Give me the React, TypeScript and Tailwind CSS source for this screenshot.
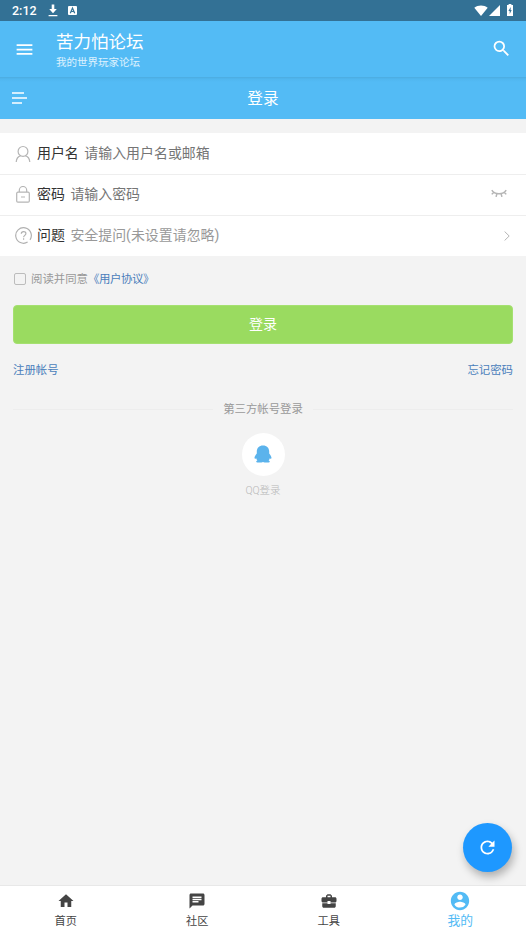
import type { ReactNode } from 'react';

type IconProps = { d: string; className?: string };

function Icon({ d, className }: IconProps) {
    return (
        <svg viewBox="0 0 24 24" fill="currentColor" className={className}>
            <path d={d} />
        </svg>
    );
}

const ICONS = {
    menu: 'M3 18h18v-2H3v2zm0-5h18v-2H3v2zm0-7v2h18V6H3z',
    search: 'M15.5 14h-.79l-.28-.27A6.471 6.471 0 0 0 16 9.5 6.5 6.5 0 1 0 9.5 16c1.61 0 3.09-.59 4.23-1.57l.27.28v.79l5 4.99L20.49 19l-4.99-5zm-6 0C7.01 14 5 11.99 5 9.5S7.01 5 9.5 5 14 7.01 14 9.5 11.99 14 9.5 14z',
    home: 'M10 20v-6h4v6h5v-8h3L12 3 2 12h3v8z',
    chat: 'M20 2H4c-1.1 0-1.99.9-1.99 2L2 22l4-4h14c1.1 0 2-.9 2-2V4c0-1.1-.9-2-2-2zM6 9h12v2H6V9zm8 5H6v-2h8v2zm4-6H6V6h12v2z',
    tools: 'M10 16v-1H3.01L3 19c0 1.11.89 2 2 2h14c1.11 0 2-.89 2-2v-4h-7v1h-4zm10-9h-4.01V5l-2-2h-4l-2 2v2H4c-1.1 0-2 .9-2 2v3c0 1.11.89 2 2 2h6v-2h4v2h6c1.1 0 2-.9 2-2V9c0-1.1-.9-2-2-2zm-6 0h-4V5h4v2z',
    account: 'M12 2C6.48 2 2 6.48 2 12s4.48 10 10 10 10-4.48 10-10S17.52 2 12 2zm0 3c1.66 0 3 1.34 3 3s-1.34 3-3 3-3-1.34-3-3 1.34-3 3-3zm0 14.2a7.2 7.2 0 0 1-6-3.22c.03-1.99 4-3.08 6-3.08 1.99 0 5.97 1.09 6 3.08a7.2 7.2 0 0 1-6 3.22z',
    refresh: 'M17.65 6.35A7.958 7.958 0 0 0 12 4c-4.42 0-7.99 3.58-7.99 8s3.57 8 7.99 8c3.73 0 6.84-2.55 7.73-6h-2.08A5.99 5.99 0 0 1 12 18c-3.31 0-6-2.69-6-6s2.69-6 6-6c1.66 0 3.14.69 4.22 1.78L13 11h7V4l-2.35 2.35z',
};

const NAV = [
    { id: 'home', label: '首页', icon: ICONS.home },
    { id: 'community', label: '社区', icon: ICONS.chat },
    { id: 'tools', label: '工具', icon: ICONS.tools },
    { id: 'mine', label: '我的', icon: ICONS.account },
];

function StatusBar() {
    return (
        <div className="h-[21px] shrink-0 bg-[#337195] flex items-center pl-3 pr-3 text-white">
            <span className="font-[Roboto,sans-serif] font-medium text-[12.5px] leading-none w-9 pt-px">2:12</span>
            <svg viewBox="0 0 10 13" className="w-[10px] h-[13px] fill-white">
                <path d="M3.7 0.5h2.6v4.6h2.5L5 9.2 1.2 5.1h2.5zM.6 11h8.8v1.2H.6z" />
            </svg>
            <svg viewBox="0 0 9 9" className="w-[9px] h-[9px] ml-[10px]">
                <rect width="9" height="9" rx="1" fill="white" />
                <path d="M2.3 7.2 4.5 2l2.2 5.2M3.1 5.5h2.8" fill="none" stroke="#337195" strokeWidth="1.2" />
            </svg>
            <div className="ml-auto flex items-center pb-px">
                <svg viewBox="0 0 14 11" className="w-[14px] h-[11px] fill-white">
                    <path d="M.3 2.8C4-.4 10-.4 13.7 2.8L7 11z" />
                </svg>
                <svg viewBox="0 0 11 11" className="w-[11px] h-[11px] ml-px fill-white">
                    <path d="M11 0v11H0z" />
                </svg>
                <svg viewBox="0 0 6 12" className="w-[6px] h-[12px] ml-[7px] mr-px">
                    <path d="M1.6 0h2.8v1H6v11H0V1h1.6z" fill="white" />
                    <path d="M3.7 3 1.4 7h1.3v3l2-4H3.6z" fill="#337195" />
                </svg>
            </div>
        </div>
    );
}

function FieldRow({ icon, label, children }: { icon: ReactNode; label: string; children: ReactNode }) {
    return (
        <div className="h-10 box-content first:pt-px flex items-center pl-[13px] pr-[14px] text-[13.95px] leading-5">
            <span className="w-5 mr-1 flex justify-center">{icon}</span>
            <span className="text-[#333] mr-[5.5px] pb-[2px]">{label}</span>
            {children}
        </div>
    );
}

function App() {
    return (
        <div className="h-[935px] w-full flex flex-col relative bg-[#f3f3f3] font-[Roboto,'Noto_Sans_CJK_SC',sans-serif]">
            <StatusBar />

            {/* App header */}
            <header className="h-14 shrink-0 bg-[#53bbf5] text-white flex items-center pl-[14px] pr-[14px]">
                <Icon d={ICONS.menu} className="w-[21px] h-[21px]" />
                <div className="ml-[21px] mt-[3px]">
                    <h1 className="text-[17.5px] leading-[23px]">苦力怕论坛</h1>
                    <p className="text-[10.5px] leading-[17px] text-white/80">我的世界玩家论坛</p>
                </div>
                <Icon d={ICONS.search} className="w-[21px] h-[21px] ml-auto mb-px" />
            </header>

            {/* Page title */}
            <div className="h-[42px] shrink-0 bg-[linear-gradient(#4cabdf,#50b6ef_2px,#53bbf5_5px)] text-white grid grid-cols-[1fr_auto_1fr] items-center px-3">
                <svg viewBox="0 0 16 12" className="w-4 h-3" stroke="white" strokeWidth="1.5">
                    <path d="M0 1h12M0 6h15M0 11h10" />
                </svg>
                <h2 className="text-[15.7px] leading-5 pt-px">登录</h2>
            </div>

            <main className="flex-1 pt-[14px]">
                <div className="bg-white divide-y divide-[#eeeeee]">
                    <FieldRow
                        label="用户名"
                        icon={
                            <svg viewBox="0 0 16 18" className="w-4 h-[18px] mb-px fill-none stroke-[#b5b5b5]" strokeWidth="1.2">
                                <circle cx="8" cy="6.4" r="4.9" />
                                <path d="M1.2 17c.3-3.4 2-5.6 4.6-6.3M14.8 17c-.3-3.4-2-5.6-4.6-6.3" />
                            </svg>
                        }
                    >
                        <span className="text-[#757575] pb-[2px]">请输入用户名或邮箱</span>
                    </FieldRow>
                    <FieldRow
                        label="密码"
                        icon={
                            <svg viewBox="0 0 14 17" className="w-[14px] h-[17px] mb-px fill-none stroke-[#b5b5b5]" strokeWidth="1.2">
                                <rect x=".7" y="6.2" width="12.6" height="10" rx="1.2" />
                                <path d="M3.3 6V4.2a3.7 3.7 0 0 1 7.4 0V6M5 11h4" />
                            </svg>
                        }
                    >
                        <span className="text-[#757575] pb-[2px]">请输入密码</span>
                        <svg viewBox="0 0 16 9" className="w-4 h-[9px] ml-auto mr-[5px] mb-[3px] fill-none stroke-[#b5b5b5]" strokeWidth="1.5">
                            <path d="M.8 1.2C3.8 6 12.2 6 15.2 1.2M2.6 3.2.8 5.4M5.8 4.8 5.1 7.8M10.2 4.8l.7 3M13.4 3.2l1.8 2.2" />
                        </svg>
                    </FieldRow>
                    <FieldRow
                        label="问题"
                        icon={
                            <svg viewBox="0 0 17 17" className="w-[17px] h-[17px] mb-px fill-none stroke-[#b0b0b0]" strokeWidth="1.2">
                                <path d="M12.6 15.1A7.8 7.8 0 1 1 15 12.8" />
                                <path d="M6.3 6.8c0-2.9 4.6-2.9 4.6-.2 0 1.8-2.3 1.8-2.3 3.7M8.6 11.3v1.4" />
                            </svg>
                        }
                    >
                        <span className="text-[#999] pb-[2px]">安全提问(未设置请忽略)</span>
                        <svg viewBox="0 0 6 10" className="w-[6px] h-[10px] ml-auto mr-[2px] mb-px fill-none stroke-[#b5b5b5]">
                            <path d="M.6.5 5.2 5 .6 9.5" />
                        </svg>
                    </FieldRow>
                </div>

                <div className="px-[13px]">
                    <div className="mt-[15px] ml-px h-[18px] flex items-center text-[11.4px]">
                        <span className="w-3 h-3 mb-[2px] rounded-[2px] border border-[#bcbcbc] mr-[5px]" />
                        <span className="text-[#999]">阅读并同意</span>
                        <a className="text-[#4a7ebb] tracking-[-0.4px]">《用户协议》</a>
                    </div>

                    <button className="block mt-4 h-[39px] w-full pb-[2px] rounded-[4px] border border-[#a5e070] bg-[#9adb60] text-white text-[14px] leading-5">登录</button>

                    <div className="mt-[18px] h-[18px] flex justify-between items-center text-[11.4px] text-[#4a7ebb]">
                        <a>注册帐号</a>
                        <a>忘记密码</a>
                    </div>

                    {/* Third-party login */}
                    <div className="mt-[21px] h-[18px] flex items-center gap-[10px] text-[11.4px] text-[#999]">
                        <span className="flex-1 h-px mb-px bg-[#ededed]" />
                        <span>第三方帐号登录</span>
                        <span className="flex-1 h-px mb-px bg-[#ededed]" />
                    </div>
                    <div className="mt-[14px] flex flex-col items-center">
                        <span className="w-[43px] h-[43px] rounded-full bg-white flex items-center justify-center">
                            <svg viewBox="0 0 18 18" className="w-[18px] h-[18px] mb-[2px] fill-[#5bb3ec]">
                                <path d="M9 .4c3.9 0 6.2 2.6 6.2 6v2.1c1 1.4 2.4 3.1 2.3 4.6-.1.9-.9.9-1.7.2-.2.9-.6 1.5-1.2 2.1 1 .4 1.4.8 1.1 1.5-.4.8-5.2.8-6.7.1-1.5.7-6.3.7-6.7-.1-.3-.7.1-1.1 1.1-1.5-.6-.6-1-1.2-1.2-2.1-.8.7-1.6.7-1.7-.2-.1-1.5 1.3-3.2 2.3-4.6V6.4c0-3.4 2.3-6 6.2-6z" />
                            </svg>
                        </span>
                        <span className="mt-[6px] text-[10.5px] leading-[17px] text-[#b8b8b8] font-light">QQ登录</span>
                    </div>
                </div>
            </main>

            {/* Bottom navigation */}
            <nav className="h-[50px] shrink-0 bg-white border-t border-[#e8e8e8] grid grid-cols-4">
                {NAV.map(item => {
                    const active = item.id === 'mine';
                    return (
                        <button key={item.id} className={`flex flex-col items-center ${active ? 'pt-[4px] text-[#53bbf5]' : 'pt-[6px] text-[#444]'}`}>
                            <Icon d={item.icon} className={active ? 'w-[22px] h-[22px]' : 'w-[18px] h-[18px]'} />
                            <span className={active ? 'text-[12.8px] leading-[18px]' : 'text-[11.2px] leading-[18px] mt-[3px]'}>{item.label}</span>
                        </button>
                    );
                })}
            </nav>

            {/* Floating refresh button */}
            <button className="absolute right-[14px] bottom-[63px] w-[49px] h-[49px] rounded-full bg-[#1e98ff] text-white flex items-center justify-center shadow-[2px_5px_8px_rgba(0,0,0,0.28)]">
                <Icon d={ICONS.refresh} className="w-[21px] h-[21px]" />
            </button>
        </div>
    );
}

export default App;
